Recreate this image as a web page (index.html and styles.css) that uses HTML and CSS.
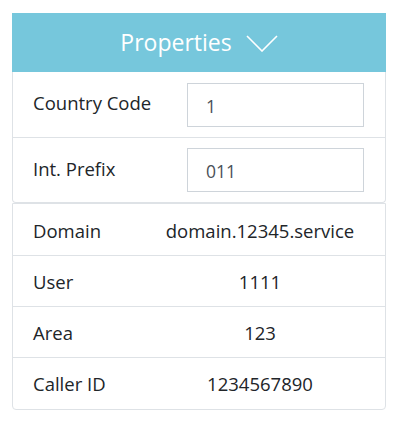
FILE: index.html
```html
<!DOCTYPE html>
<html>
<head>
<meta charset="utf-8">
<link rel="stylesheet" href="styles.css">
</head>
<body>
<div class="panel">
  <div class="header">
    <span class="title">Properties</span>
    <svg class="chev" width="32" height="17" viewBox="0 0 32 17"><polyline points="1,1 16,16 31,1" fill="none" stroke="#fff" stroke-width="1.6"/></svg>
  </div>
  <div class="card form">
    <div class="frow">
      <label class="lbl">Country Code</label>
      <div class="input">1</div>
    </div>
    <div class="frow">
      <label class="lbl">Int. Prefix</label>
      <div class="input">011</div>
    </div>
  </div>
  <div class="card table">
    <div class="trow"><span class="lbl">Domain</span><span class="val">domain.12345.service</span></div>
    <div class="trow"><span class="lbl">User</span><span class="val">1111</span></div>
    <div class="trow"><span class="lbl">Area</span><span class="val">123</span></div>
    <div class="trow"><span class="lbl">Caller ID</span><span class="val">1234567890</span></div>
  </div>
</div>
</body>
</html>
```
FILE: styles.css
```css
html, body { margin: 0; padding: 0; background: #fff; }
body {
  font-family: "Open Sans", "Noto Sans", sans-serif;
  color: #212529;
  padding: 13px 12px;
}
.panel { width: 374px; }
.header {
  height: 59px;
  background: #76c7dc;
  color: #fff;
  display: flex;
  align-items: center;
  justify-content: center;
  gap: 14px;
}
.title { font-size: 23px; line-height: 1; }
.chev { display: block; margin-top: 2px; }
.card {
  border: 1px solid #dee2e6;
  border-radius: 0 0 4px 4px;
}
.form { border-top: none; }
.frow {
  height: 64px;
  display: grid;
  grid-template-columns: 154px 1fr;
  align-items: center;
  padding: 0 21px 0 20px;
}
.frow:first-child { height: 65px; }
.frow + .frow { border-top: 1px solid #dee2e6; }
.frow .lbl { font-size: 18.5px; margin-top: -4px; }
.input {
  height: 40px;
  border: 1px solid #ced4da;
  display: flex;
  align-items: center;
  padding-left: 18px;
  font-size: 17.5px;
  color: #495057;
  padding-top: 2px;
}
.table { padding: 1px 0; }
.trow {
  height: 50px;
  display: grid;
  grid-template-columns: 102px 1fr;
  align-items: center;
  padding-left: 20px;
  font-size: 18.5px;
}
.trow + .trow { border-top: 1px solid #dee2e6; }
.val { text-align: center; }
```
